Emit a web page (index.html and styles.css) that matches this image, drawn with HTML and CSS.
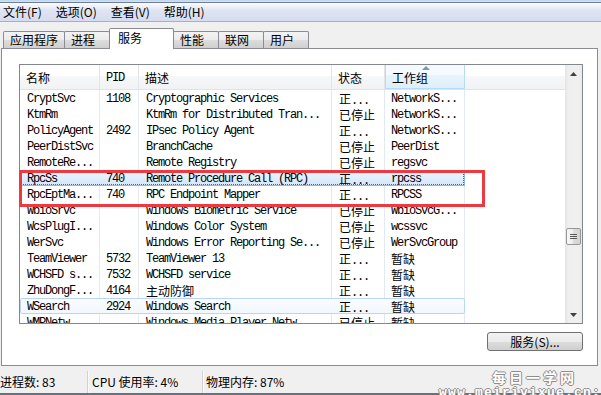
FILE: index.html
```html
<!DOCTYPE html>
<html lang="zh-CN">
<head>
    <meta charset="UTF-8">
    <title>Windows 任务管理器</title>
    <link rel="stylesheet" href="styles.css">
</head>
<body>

    <div class="chrome"></div>

    <!-- Barre de menus -->
    <div class="menubar">
        <span>文件(F)</span>
        <span>选项(O)</span>
        <span>查看(V)</span>
        <span>帮助(H)</span>
    </div>

    <!-- Onglets -->
    <div class="tabs">
        <div class="tab">应用程序</div>
        <div class="tab">进程</div>
        <div class="tab active">服务</div>
        <div class="tab">性能</div>
        <div class="tab">联网</div>
        <div class="tab">用户</div>
    </div>

    <div class="panel">
        <div class="listview">
            <div class="lv-main">
                <div class="lv-header">
                    <div class="hcell">名称</div>
                    <div class="hcell mono">PID</div>
                    <div class="hcell">描述</div>
                    <div class="hcell">状态</div>
                    <div class="hcell sorted">工作组</div>
                    <div class="hfill"></div>
                </div>
                <div class="lv-rows">
                    <div class="row"><span>CryptSvc</span><span>1108</span><span>Cryptographic Services</span><span><i class="cn">正</i>...</span><span>NetworkS...</span></div>
                    <div class="row"><span>KtmRm</span><span></span><span>KtmRm for Distributed Tran...</span><span class="cn">已停止</span><span>NetworkS...</span></div>
                    <div class="row"><span>PolicyAgent</span><span>2492</span><span>IPsec Policy Agent</span><span><i class="cn">正</i>...</span><span>NetworkS...</span></div>
                    <div class="row"><span>PeerDistSvc</span><span></span><span>BranchCache</span><span class="cn">已停止</span><span>PeerDist</span></div>
                    <div class="row"><span>RemoteRe...</span><span></span><span>Remote Registry</span><span class="cn">已停止</span><span>regsvc</span></div>
                    <div class="row selected"><span>RpcSs</span><span>740</span><span>Remote Procedure Call (RPC)</span><span><i class="cn">正</i>...</span><span>rpcss</span></div>
                    <div class="row"><span>RpcEptMa...</span><span>740</span><span>RPC Endpoint Mapper</span><span><i class="cn">正</i>...</span><span>RPCSS</span></div>
                    <div class="row"><span>WbioSrvc</span><span></span><span>Windows Biometric Service</span><span class="cn">已停止</span><span>WbioSvcG...</span></div>
                    <div class="row"><span>WcsPlugI...</span><span></span><span>Windows Color System</span><span class="cn">已停止</span><span>wcssvc</span></div>
                    <div class="row"><span>WerSvc</span><span></span><span>Windows Error Reporting Se...</span><span class="cn">已停止</span><span>WerSvcGroup</span></div>
                    <div class="row"><span>TeamViewer</span><span>5732</span><span>TeamViewer 13</span><span><i class="cn">正</i>...</span><span class="cn">暂缺</span></div>
                    <div class="row"><span>WCHSFD s...</span><span>7532</span><span>WCHSFD service</span><span><i class="cn">正</i>...</span><span class="cn">暂缺</span></div>
                    <div class="row"><span>ZhuDongF...</span><span>4164</span><span class="cn">主动防御</span><span><i class="cn">正</i>...</span><span class="cn">暂缺</span></div>
                    <div class="row hover"><span>WSearch</span><span>2924</span><span>Windows Search</span><span><i class="cn">正</i>...</span><span class="cn">暂缺</span></div>
                    <div class="row"><span>WMPNetw...</span><span></span><span>Windows Media Player Netw...</span><span class="cn">已停止</span><span class="cn">暂缺</span></div>
                </div>
            </div>

            <!-- Barre de défilement -->
            <div class="scrollbar">
                <div class="sb-btn">
                    <svg width="7" height="4" viewBox="0 0 7 4"><polygon points="3.5,0 7,4 0,4" fill="#404040"/></svg>
                </div>
                <div class="sb-track">
                    <div class="sb-thumb">
                        <svg width="7" height="6" viewBox="0 0 7 6"><path d="M0 0.5h7M0 2.5h7M0 4.5h7" stroke="#5a5a5a" stroke-width="1"/></svg>
                    </div>
                </div>
                <div class="sb-btn">
                    <svg width="7" height="4" viewBox="0 0 7 4"><polygon points="0,0 7,0 3.5,4" fill="#404040"/></svg>
                </div>
            </div>
        </div>

        <div class="actions">
            <button class="svc-btn">服务(S)...</button>
        </div>

        <!-- Cadre rouge d'annotation -->
        <div class="callout"></div>
    </div>

    <!-- Barre d'état -->
    <div class="statusbar">
        <div class="stat first">进程数: 83</div>
        <div class="stat second">CPU 使用率: 4%</div>
        <div class="stat last">物理内存: 87%</div>
    </div>

    <div class="watermark">
        <div class="wm-title">每日一学网</div>
        <div class="wm-url">www.meiriyixue.cn:</div>
    </div>

</body>
</html>
```

FILE: styles.css
```css
* {
    box-sizing: border-box;
}

html, body {
    margin: 0;
}

body {
    position: relative;
    width: 601px;
    height: 395px;
    overflow: hidden;
    background-color: #f0f0f0;
    font-family: "Noto Sans CJK SC", "Liberation Sans", sans-serif;
    font-size: 12px;
    line-height: 16px;
    color: #000;
}

.chrome {
    height: 3px;
    background: linear-gradient(#bcd3ef, #d6e5f7);
    border-bottom: 1px solid #6f8094;
}

.menubar {
    display: flex;
    align-items: center;
    gap: 14px;
    height: 19px;
    padding-left: 3px;
    background: linear-gradient(#fbfcfe, #e0e5f3 40%, #d6dcef);
    border-bottom: 1px solid #a9afc0;
}

/* Onglets */
.tabs {
    position: relative;
    z-index: 1;
    display: flex;
    align-items: flex-end;
    height: 27px;
    padding-left: 3px;
    margin-bottom: -1px;
}

.tab {
    min-width: 46px;
    height: 17px;
    margin-bottom: 1px;
    padding: 0 6px;
    line-height: 16px;
    border: 1px solid #898c95;
    border-bottom: none;
    border-radius: 2px 2px 0 0;
    background: linear-gradient(#f3f3f3, #ebebeb 50%, #dddddd 51%, #cfcfcf);
}

.tab + .tab {
    margin-left: -1px;
}

.tab.active {
    min-width: 65px;
    height: 21px;
    margin-bottom: 0;
    padding: 1px 8px 0;
    background: #fff;
}

.panel {
    position: relative;
    width: 597px;
    height: 318px;
    margin-left: 1px;
    border: 1px solid #898c95;
    background: #fff;
}

/* Liste des services */
.listview {
    display: flex;
    width: 564px;
    height: 260px;
    margin: 15px 0 0 17px;
    border: 1px solid #828790;
}

.lv-main {
    flex: 1;
    display: flex;
    flex-direction: column;
    overflow: hidden;
}

.lv-header {
    display: flex;
    flex: none;
    height: 25px;
    border-bottom: 1px solid #e2e3e5;
    background: linear-gradient(#fff 45%, #f7f8fa 45%, #f1f2f4);
}

.hcell {
    position: relative;
    padding: 2px 0 0 6px;
    line-height: 22px;
    border-right: 1px solid #e3e4e6;
}

.hcell:nth-child(1) { width: 80px; }
.hcell:nth-child(2) { width: 39px; }
.hcell:nth-child(3) { width: 193px; }
.hcell:nth-child(4) { width: 53px; }
.hcell:nth-child(5) { width: 80px; }

.hcell.mono {
    font-family: "Liberation Mono", monospace;
    letter-spacing: -1.2px;
}

.hcell.sorted {
    border: 1px solid #b6dcf4;
    border-top: none;
    background: linear-gradient(#f4fafd 45%, #e8f4fc 45%, #ddeffb);
}

.hcell.sorted::before {
    content: "";
    position: absolute;
    top: 1px;
    left: 36px;
    border-left: 4px solid transparent;
    border-right: 4px solid transparent;
    border-bottom: 4px solid #7d97b0;
}

.hfill {
    flex: 1;
}

.lv-rows {
    flex: 1;
    overflow: hidden;
    background-image: linear-gradient(to right,
        transparent 79px, #e6ebf2 79px, #e6ebf2 80px, transparent 80px,
        transparent 118px, #e6ebf2 118px, #e6ebf2 119px, transparent 119px,
        transparent 311px, #e1e9f4 311px, #e1e9f4 312px, transparent 312px,
        transparent 364px, #e1e9f4 364px, #e1e9f4 365px, transparent 365px,
        transparent 444px, #e1e9f4 444px, #e1e9f4 445px, transparent 445px);
    background-size: 446px 100%;
    background-repeat: no-repeat;
}

.row {
    display: grid;
    grid-template-columns: 79px 39px 193px 53px 79px;
    width: 445px;
    height: 16px;
    line-height: 14px;
    border: 1px solid transparent;
    font-family: "Liberation Mono", "Noto Sans CJK SC", monospace;
    letter-spacing: -1.2px;
    white-space: nowrap;
}

.row span {
    padding: 1px 0 0 6px;
}

.row span:nth-child(3),
.row span:nth-child(4) {
    padding-left: 7px;
}

.cn {
    font-family: "Noto Sans CJK SC", sans-serif;
    font-style: normal;
    letter-spacing: 0;
}

.row.selected {
    border: 1px solid #8fb6e6;
    outline: 1px dotted #56657a;
    outline-offset: -2px;
    background: linear-gradient(#eff6fe, #d3e6fc);
}

.row.hover {
    border: 1px solid #b8d6fb;
    border-radius: 2px;
    background: linear-gradient(#fbfdff, #f1f7fe);
}

/* Barre de défilement */
.scrollbar {
    display: flex;
    flex-direction: column;
    width: 17px;
    background: linear-gradient(to right, #e4e4e4, #efefef 20%, #f0f0f0 80%, #e9e9e9);
}

.sb-btn {
    display: flex;
    align-items: center;
    justify-content: center;
    height: 17px;
}

.sb-track {
    flex: 1;
}

.sb-thumb {
    display: flex;
    align-items: center;
    justify-content: center;
    width: 15px;
    height: 17px;
    margin: 146px 0 0 1px;
    border: 1px solid #979797;
    border-radius: 2px;
    background: linear-gradient(to right, #f7f7f7, #ececec 50%, #dcdcdc 50%, #d4d4d4);
}

.actions {
    display: flex;
    justify-content: flex-end;
    margin-top: 8px;
    padding-right: 14px;
}

.svc-btn {
    width: 96px;
    height: 19px;
    padding: 0;
    font-family: "Noto Sans CJK SC", sans-serif;
    font-size: 12px;
    line-height: 16px;
    color: #000;
    border: 1px solid #707070;
    border-radius: 3px;
    background: linear-gradient(#f2f2f2, #ebebeb 50%, #dddddd 50%, #cfcfcf);
}

.callout {
    position: absolute;
    left: 17px;
    top: 121px;
    width: 466px;
    height: 37px;
    border: 3px solid #ec3a40;
}

/* Barre d'état */
.statusbar {
    display: flex;
    height: 29px;
    padding-top: 5px;
    border-bottom: 2px solid #66727f;
}

.stat {
    line-height: 22px;
    border-right: 1px solid #d2d2d2;
    box-shadow: 1px 0 0 #fbfbfb;
}

.stat.first {
    width: 88px;
}

.stat.second {
    width: 115px;
    padding-left: 4px;
}

.stat.last {
    padding-left: 3px;
    border-right: none;
    box-shadow: none;
}

.watermark {
    position: absolute;
    left: 438px;
    top: 370px;
    display: flex;
    flex-direction: column;
    align-items: flex-end;
    width: 163px;
    color: #fff;
    font-weight: bold;
    text-shadow: 1px 0 0 #8c8c8c, -1px 0 0 #8c8c8c, 0 1px 0 #8c8c8c, 0 -1px 0 #8c8c8c;
}

.wm-title {
    margin-right: 24px;
    font-size: 14px;
    line-height: 15px;
    letter-spacing: 3px;
}

.wm-url {
    margin-top: 1px;
    font-family: "Liberation Mono", monospace;
    font-size: 13px;
    line-height: 13px;
    letter-spacing: 1.2px;
}
```
